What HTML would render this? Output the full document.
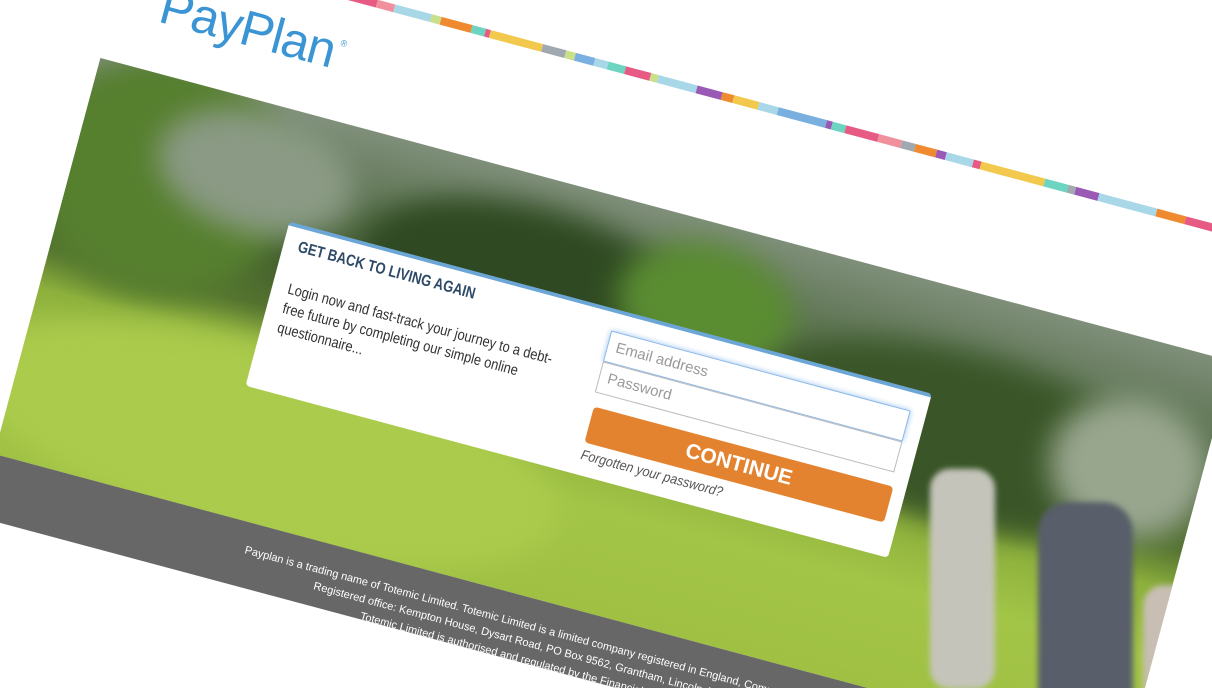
<!DOCTYPE html>
<html><head><meta charset="utf-8"><style>
html,body{margin:0;padding:0;width:1212px;height:688px;overflow:hidden;background:#fff;font-family:"Liberation Sans",sans-serif}
#vp{position:relative;width:1212px;height:688px;overflow:hidden}
#pg{position:absolute;left:0;top:0;width:1400px;height:700px;transform-origin:0 0;transform:rotate(15deg)}
.a{position:absolute}
#stripe{left:200px;top:-98px;width:1400px;height:8px;display:flex}
#stripe span{height:8px;display:block;flex:none}
#logo{left:157px;top:-66px;font-size:50px;color:#3b95d4;letter-spacing:-1px}
#logo sup{font-size:9px;vertical-align:top;position:relative;top:14px;left:4px}
#photo{left:112px;top:30px;width:1172px;height:410px;overflow:hidden;
background:linear-gradient(180deg,#7f8f7a 0%,#5d7452 18%,#3f5a2c 35%,#54732f 48%,#8db03c 58%,#a3c547 75%,#9fc043 100%)}
.b{position:absolute;border-radius:50%;filter:blur(14px)}
#box{left:337px;top:139px;width:665px;height:170px;background:#fff;border-top:4px solid #6ca6d6;border-radius:4px;box-sizing:border-box}
#box h2{position:absolute;left:15px;top:10px;margin:0;font-size:16px;color:#2e4a66;font-weight:bold;transform:scaleX(.82);transform-origin:0 0;white-space:nowrap}
#box p{position:absolute;left:16px;top:52px;margin:0;font-size:15px;line-height:20px;color:#333;transform:scaleX(.86);transform-origin:0 0;white-space:nowrap}
.in{position:absolute;left:339px;width:310px;height:32px;border:1px solid #bbb;box-sizing:border-box;background:#fff;font-size:15px;color:#999;padding:6px 8px}
#btn{left:342px;top:96px;width:310px;height:37px;background:#e3832f;border-radius:4px;color:#fff;font-weight:bold;font-size:21px;text-align:center;line-height:37px;position:absolute}
#fg{position:absolute;left:342px;top:137px;font-size:14px;font-style:italic;color:#555;transform:scaleX(.9);transform-origin:0 0}
#foot{left:-200px;top:440px;width:1600px;height:65px;background:#676767;overflow:hidden;color:#fff;font-size:11px}
</style></head><body><div id="vp">
<div id="pg">
<div id="stripe" class="a">
<span style="width:40px;background:#a8d8e8"></span><span style="width:20px;background:#c9df8a"></span><span style="width:28px;background:#a0a8b0"></span><span style="width:18px;background:#6cd4c0"></span><span style="width:6px;background:#7ab0e0"></span><span style="width:8px;background:#9b59b6"></span><span style="width:45px;background:#e65a84"></span><span style="width:18px;background:#f0909c"></span><span style="width:38px;background:#a8d8e8"></span><span style="width:10px;background:#c9df8a"></span><span style="width:32px;background:#f08a30"></span><span style="width:14px;background:#6cd4c0"></span><span style="width:5px;background:#e65a84"></span><span style="width:54px;background:#f2c94c"></span><span style="width:24px;background:#a0a8b0"></span><span style="width:10px;background:#c9df8a"></span><span style="width:20px;background:#7ab0e0"></span><span style="width:14px;background:#a8d8e8"></span><span style="width:18px;background:#6cd4c0"></span><span style="width:26px;background:#e65a84"></span><span style="width:8px;background:#c9df8a"></span><span style="width:40px;background:#a8d8e8"></span><span style="width:26px;background:#9b59b6"></span><span style="width:12px;background:#f08a30"></span><span style="width:26px;background:#f2c94c"></span><span style="width:20px;background:#a8d8e8"></span><span style="width:50px;background:#7ab0e0"></span><span style="width:6px;background:#9b59b6"></span><span style="width:14px;background:#6cd4c0"></span><span style="width:34px;background:#e65a84"></span><span style="width:24px;background:#f0909c"></span><span style="width:14px;background:#a0a8b0"></span><span style="width:22px;background:#f08a30"></span><span style="width:10px;background:#9b59b6"></span><span style="width:28px;background:#a8d8e8"></span><span style="width:8px;background:#e65a84"></span><span style="width:66px;background:#f2c94c"></span><span style="width:24px;background:#6cd4c0"></span><span style="width:8px;background:#a0a8b0"></span><span style="width:24px;background:#9b59b6"></span><span style="width:60px;background:#a8d8e8"></span><span style="width:30px;background:#f08a30"></span><span style="width:40px;background:#e65a84"></span><span style="width:60px;background:#f2c94c"></span><span style="width:40px;background:#6cd4c0"></span>
</div>
<div id="logo" class="a">PayPlan<sup>®</sup></div>
<div id="photo" class="a">
<div class="b" style="left:-40px;top:-20px;width:260px;height:240px;background:#567f2e"></div>
<div class="b" style="left:80px;top:10px;width:200px;height:120px;background:#8a9a84"></div>
<div class="b" style="left:300px;top:30px;width:350px;height:160px;background:#2f4a22"></div>
<div class="b" style="left:560px;top:20px;width:180px;height:130px;background:#5a8c32"></div>
<div class="b" style="left:720px;top:60px;width:420px;height:170px;background:#3a5628"></div>
<div class="b" style="left:1020px;top:60px;width:160px;height:140px;background:#98a68e"></div>
<div class="b" style="left:-40px;top:230px;width:600px;height:200px;background:#abcb4c"></div>
<div class="a" style="left:1050px;top:170px;width:95px;height:240px;background:#585e6a;transform:rotate(-15deg);border-radius:30px 30px 10px 10px;filter:blur(3px)"></div>
<div class="a" style="left:935px;top:170px;width:65px;height:220px;background:#c4c4ba;transform:rotate(-15deg);border-radius:20px;filter:blur(3px)"></div>
<div class="a" style="left:1165px;top:230px;width:50px;height:170px;background:#c8beb4;transform:rotate(-15deg);border-radius:20px;filter:blur(3px)"></div>
</div>
<div id="box" class="a">
<h2>GET BACK TO LIVING AGAIN</h2>
<p>Login now and fast-track your journey to a debt-<br>free future by completing our simple online<br>questionnaire...</p>
<div class="in" style="top:18px;border-color:#8ab8e8;box-shadow:0 0 6px #9cc4ee">Email address</div>
<div class="in" style="top:50px">Password</div>
<div id="btn">CONTINUE</div>
<div id="fg">Forgotten your password?</div>
</div>
<div id="foot" class="a">
<div style="position:absolute;left:579px;top:20px;white-space:nowrap;line-height:17px;text-align:center">Payplan is a trading name of Totemic Limited. Totemic Limited is a limited company registered in England, Company No. 03781017.<br>Registered office: Kempton House, Dysart Road, PO Box 9562, Grantham, Lincolnshire, NG31 0EA.<br>Totemic Limited is authorised and regulated by the Financial Conduct Authority</div>
</div>
</div>
</div></body></html>
